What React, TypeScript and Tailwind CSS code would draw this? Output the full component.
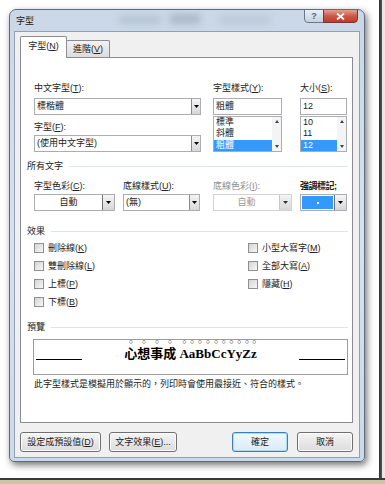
import React from "react";

const FONT = "font-['Liberation_Sans','Noto_Sans_CJK_TC',sans-serif]";

function Arrow({ disabled = false }: { disabled?: boolean }) {
  return (
    <svg width="5" height="3" viewBox="0 0 5 3">
      <path d="M0 0H5L2.5 3Z" fill={disabled ? "#333" : "#000"} />
    </svg>
  );
}

function DropBtn({ className, disabled }: { className: string; disabled?: boolean }) {
  return (
    <div
      className={`flex items-center justify-center border-l ${disabled ? "border-[#c8c8c8]" : "border-[#8a8a8a]"} bg-gradient-to-b from-[#f4f4f4] to-[#d8d8d8] ${className}`}
    >
      <Arrow disabled={disabled} />
    </div>
  );
}

function Label({ children, className = "" }: { children: React.ReactNode; className?: string }) {
  return <div className={`h-[11px] text-[9px] leading-[11px] whitespace-nowrap ${className}`}>{children}</div>;
}

function SectionHeader({ text }: { text: string }) {
  return (
    <div className="flex h-[11px] items-center w-[321px]">
      <span className="text-[9px] leading-[11px] text-[#222]">{text}</span>
      <div className="ml-[6px] flex-1 h-px bg-[#dce4ec]" />
    </div>
  );
}

function Checkbox({ children }: { children: React.ReactNode }) {
  return (
    <div className="flex h-[18px] items-center">
      <div className="w-[10px] h-[10px] border border-[#8e8f8f] bg-gradient-to-br from-[#d4d4d4] to-[#f7f7f7]" />
      <span className="ml-[4px] text-[9px] leading-[11px] text-[#222]">{children}</span>
    </div>
  );
}

function ListBox({ items, selected, className }: { items: string[]; selected: number; className: string }) {
  return (
    <div className={`flex h-[36px] border border-[#abadb3] bg-white ${className}`}>
      <div className="flex-1 flex flex-col">
        {items.map((it, i) => (
          <div
            key={it}
            className={`h-[11.3px] pl-[2px] text-[9px] leading-[11px] ${i === selected ? "bg-[#3399ff] text-white" : "text-[#222]"}`}
          >
            {it}
          </div>
        ))}
      </div>
      <div className="w-[9px] flex flex-col items-center justify-between py-[3px] bg-[#f4f4f4]">
        <svg width="4" height="3" viewBox="0 0 4 3">
          <path d="M0 3H4L2 0Z" fill="#444" />
        </svg>
        <svg width="4" height="3" viewBox="0 0 4 3">
          <path d="M0 0H4L2 3Z" fill="#444" />
        </svg>
      </div>
    </div>
  );
}

function Button({ children, className, isDefault }: { children: React.ReactNode; className: string; isDefault?: boolean }) {
  return (
    <div
      className={`h-[20px] flex items-center justify-center rounded-[3px] border text-[9px] leading-[11px] text-[#222] ${
        isDefault
          ? "border-[#3c7fb1] bg-gradient-to-b from-[#f0f8fd] to-[#d9ebf7] shadow-[inset_0_0_0_1px_#a8dbf5]"
          : "border-[#707070] bg-gradient-to-b from-[#f4f4f4] to-[#dcdcdc] shadow-[inset_0_0_0_1px_#fcfcfc]"
      } ${className}`}
    >
      {children}
    </div>
  );
}

export default function App() {
  return (
    <div className={`w-[385px] h-[484px] bg-white overflow-hidden flex flex-col ${FONT}`}>
      <div className="flex h-[478px]">
        <div className="w-[379px] bg-white pl-[9px] pt-[9px]">
          {/* window */}
          <div className="w-[356px] h-[453px] rounded-t-[7px] rounded-b-[5px] border border-[#5d6c80] bg-gradient-to-b from-[#c9d7e6] via-[#d6e2ee] to-[#cdd9e6] shadow-[2px_3px_7px_rgba(0,0,0,0.55)] flex flex-col relative overflow-hidden">
            {/* blurred background in title bar */}
            <div className="absolute left-[110px] top-[6px] w-[40px] h-[8px] bg-[#9aa8b8] opacity-40 blur-[3px]" />
            <div className="absolute left-[160px] top-[4px] w-[30px] h-[10px] bg-[#8492a3] opacity-40 blur-[3px]" />
            <div className="absolute left-[210px] top-[6px] w-[50px] h-[8px] bg-[#a8b6c6] opacity-40 blur-[3px]" />
            {/* title bar */}
            <div className="relative h-[21px] flex items-start">
              <div className="pl-[6px] pt-[6px] text-[9px] leading-[11px] text-[#1a1a1a]">字型</div>
              <div className="ml-auto mr-[6px] flex">
                <div className="w-[20px] h-[14px] -mt-px rounded-bl-[4px] border border-[#6b7889] bg-gradient-to-b from-[#e8eef5] to-[#c6d2df] flex items-center justify-center text-[9px] font-bold text-[#55647a] leading-none">
                  ?
                </div>
                <div className="w-[35px] h-[14px] -mt-px -ml-px rounded-br-[4px] border border-[#6e3a34] bg-gradient-to-b from-[#e3a193] via-[#c75a49] to-[#c0392b] flex items-center justify-center">
                  <svg width="9" height="7" viewBox="0 0 9 7">
                    <path d="M1 0.5L8 6.5M8 0.5L1 6.5" stroke="#fff" strokeWidth="1.8" />
                  </svg>
                </div>
              </div>
            </div>
            {/* client */}
            <div className="relative mx-[4px] w-[346px] h-[427px] border border-[#8fa0b4] bg-[#f0f0f0] pl-[5px] pt-[4px] flex flex-col">
              {/* tabs */}
              <div className="flex h-[21px] items-end">
                <div className="relative z-10 w-[47px] h-[22px] -mb-px border border-b-0 border-[#898c95] bg-white rounded-t-[2px] flex items-center justify-center text-[9px] leading-[11px] text-[#222] pb-[2px]">
                  字型(<u>N</u>)
                </div>
                <div className="w-[44px] h-[17px] -ml-px border border-b-0 border-[#898c95] bg-gradient-to-b from-[#f2f2f2] to-[#dcdcdc] rounded-t-[2px] flex items-center justify-center text-[9px] leading-[11px] text-[#222]">
                  進階(<u>V</u>)
                </div>
              </div>
              {/* panel */}
              <div className="w-[333px] h-[366px] border border-[#898c95] bg-white pl-[6px] pt-[25px] flex flex-col text-[#222]">
                {/* top section */}
                <div className="ml-[7px] flex h-[70px]">
                  <div className="w-[167px] flex flex-col">
                    <Label>
                      中文字型(<u>T</u>):
                    </Label>
                    <div className="mt-[4px] flex h-[17px] border border-[#abadb3] bg-white">
                      <div className="flex-1 pl-[2px] text-[9px] leading-[15px]">標楷體</div>
                      <DropBtn className="w-[9px]" />
                    </div>
                    <Label className="mt-[7px]">
                      字型(<u>F</u>):
                    </Label>
                    <div className="mt-[2px] flex h-[17px] border border-[#abadb3] bg-white">
                      <div className="flex-1 pl-[2px] text-[9px] leading-[15px]">(使用中文字型)</div>
                      <DropBtn className="w-[9px]" />
                    </div>
                  </div>
                  <div className="ml-[12px] w-[69px] flex flex-col">
                    <Label>
                      字型樣式(<u>Y</u>):
                    </Label>
                    <div className="mt-[4px] h-[17px] border border-[#abadb3] bg-white pl-[2px] text-[9px] leading-[15px]">
                      粗體
                    </div>
                    <ListBox className="mt-px" items={["標準", "斜體", "粗體"]} selected={2} />
                  </div>
                  <div className="ml-[18px] w-[47px] flex flex-col">
                    <Label>
                      大小(<u>S</u>):
                    </Label>
                    <div className="mt-[4px] h-[17px] border border-[#abadb3] bg-white pl-[2px] text-[9px] leading-[15px]">
                      12
                    </div>
                    <ListBox className="mt-px" items={["10", "11", "12"]} selected={2} />
                  </div>
                </div>

                <div className="mt-[8px]">
                  <SectionHeader text="所有文字" />
                </div>

                {/* emphasis row */}
                <div className="ml-[7px] mt-[9px] flex">
                  <div className="w-[81px] flex flex-col">
                    <Label>
                      字型色彩(<u>C</u>):
                    </Label>
                    <div className="mt-[2px] flex h-[17px] border border-[#abadb3] bg-white">
                      <div className="flex-1 text-center text-[9px] leading-[15px]">自動</div>
                      <DropBtn className="w-[12px] border-[#707070]" />
                    </div>
                  </div>
                  <div className="ml-[8px] w-[77px] flex flex-col">
                    <Label>
                      底線樣式(<u>U</u>):
                    </Label>
                    <div className="mt-[2px] flex h-[17px] border border-[#abadb3] bg-white">
                      <div className="flex-1 pl-[2px] text-[9px] leading-[15px]">(無)</div>
                      <DropBtn className="w-[10px]" />
                    </div>
                  </div>
                  <div className="ml-[13px] w-[79px] flex flex-col">
                    <Label className="text-[#8d8d8d]">
                      底線色彩(<u>I</u>):
                    </Label>
                    <div className="mt-[2px] flex h-[17px] border border-[#d2d2d2] bg-white">
                      <div className="flex-1 text-center text-[9px] leading-[15px] text-[#9a9a9a]">自動</div>
                      <DropBtn className="w-[12px] border-[#8a8a8a]" disabled />
                    </div>
                  </div>
                  <div className="ml-[8px] w-[47px] flex flex-col">
                    <Label className="font-bold tracking-[-0.5px]">強調標記;</Label>
                    <div className="mt-[2px] flex h-[17px] border border-[#abadb3] bg-white">
                      <div className="flex-1 p-px">
                        <div className="h-full bg-[#3399ff] flex items-center justify-center">
                          <div className="w-[2px] h-[2px] bg-white" />
                        </div>
                      </div>
                      <DropBtn className="w-[12px] border-[#707070]" />
                    </div>
                  </div>
                </div>

                <div className="mt-[15px]">
                  <SectionHeader text="效果" />
                </div>

                {/* checkboxes */}
                <div className="ml-[7px] mt-[2px] flex">
                  <div className="w-[214px] flex flex-col">
                    <Checkbox>
                      刪除線(<u>K</u>)
                    </Checkbox>
                    <Checkbox>
                      雙刪除線(<u>L</u>)
                    </Checkbox>
                    <Checkbox>
                      上標(<u>P</u>)
                    </Checkbox>
                    <Checkbox>
                      下標(<u>B</u>)
                    </Checkbox>
                  </div>
                  <div className="flex flex-col">
                    <Checkbox>
                      小型大寫字(<u>M</u>)
                    </Checkbox>
                    <Checkbox>
                      全部大寫(<u>A</u>)
                    </Checkbox>
                    <Checkbox>
                      隱藏(<u>H</u>)
                    </Checkbox>
                  </div>
                </div>

                <div className="mt-[11px]">
                  <SectionHeader text="預覽" />
                </div>

                {/* preview */}
                <div className="ml-[6px] mt-[6px] w-[315px] h-[36px] border border-[#9c9c9c] bg-white flex items-end pb-[13px] px-[2px]">
                  <div className="w-[46px] h-px bg-black mb-[1px]" />
                  <div className="flex-1 flex justify-center">
                    <span className="text-[13px] leading-[15px] font-bold text-black font-['Liberation_Serif','Noto_Sans_CJK_TC',serif] [text-emphasis:open_circle] [text-emphasis-position:over_right]">
                      心想事成 AaBbCcYyZz
                    </span>
                  </div>
                  <div className="w-[46px] h-px bg-black mb-[1px]" />
                </div>

                <div className="ml-[7px] mt-[4px]">
                  <Label>此字型樣式是模擬用於顯示的，列印時會使用最接近、符合的樣式。</Label>
                </div>
              </div>
              {/* buttons */}
              <div className="mt-[9px] flex w-[333px]">
                <Button className="w-[81px]">
                  設定成預設值(<u>D</u>)
                </Button>
                <Button className="ml-[8px] w-[68px]">
                  文字效果(<u>E</u>)...
                </Button>
                <Button className="ml-auto w-[56px]" isDefault>
                  確定
                </Button>
                <Button className="ml-[9px] w-[56px]">取消</Button>
              </div>
            </div>
          </div>
        </div>
        <div className="w-[3px] bg-gradient-to-r from-[#2e2e2e] to-[#5a5a5a]" />
        <div className="flex-1 bg-[#e8e8e8]" />
      </div>
      <div className="h-[2px] bg-[#3a3a3a]" />
      <div className="flex-1 bg-[#cdc6a5]" />
    </div>
  );
}
